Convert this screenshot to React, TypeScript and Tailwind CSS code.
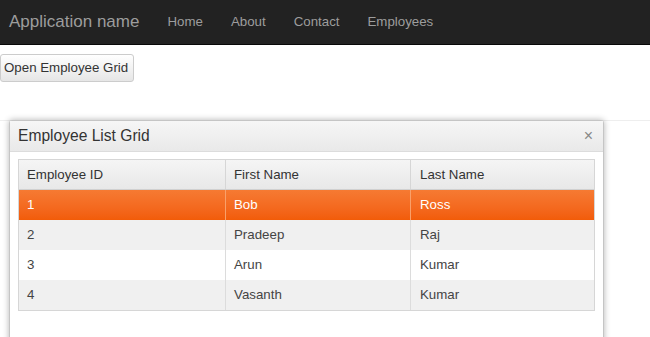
import React from "react";

const rows = [
  { id: "1", first: "Bob", last: "Ross" },
  { id: "2", first: "Pradeep", last: "Raj" },
  { id: "3", first: "Arun", last: "Kumar" },
  { id: "4", first: "Vasanth", last: "Kumar" },
];

export default function App() {
  return (
    <div
      className="relative w-[650px] h-[337px] overflow-hidden bg-white text-[#333]"
      style={{ fontFamily: '"Liberation Sans", Arial, sans-serif' }}
    >
      <nav className="h-[45px] bg-[#222] border-b border-[#080808] flex items-center">
        <span className="ml-[9px] text-[17px] text-[#9d9d9d]">Application name</span>
        <div className="flex ml-[28px] gap-[28px] text-[13.3px] text-[#9d9d9d]">
          <span>Home</span>
          <span>About</span>
          <span>Contact</span>
          <span>Employees</span>
        </div>
      </nav>
      <div className="pt-[9px]">
        <button className="h-[28px] w-[134px] pl-[3px] text-left text-[13.3px] text-[#333] border border-[#ccc] rounded-[3px] bg-gradient-to-b from-[#ffffff] to-[#e6e6e6]">
          Open Employee Grid
        </button>
      </div>
      <hr className="mt-[38px] border-t border-[#eee]" />

      <div className="absolute left-[9px] top-[120px] w-[595px] h-[240px] bg-white border border-[#c5c5c5] rounded-t-[3px] shadow-[0_0_6px_rgba(0,0,0,0.3)]">
        <div className="h-[31px] flex items-center justify-between pl-[8px] pr-[10px] bg-gradient-to-b from-[#f6f6f6] to-[#e9e9e9] border-b border-[#dcdcdc]">
          <span className="text-[15.6px] text-[#333]">Employee List Grid</span>
          <span className="text-[16px] leading-none text-[#888]">×</span>
        </div>
        <div className="mt-[7px] ml-[8px] w-[577px] border border-[#d6d6d6]">
          <div className="grid grid-cols-[207px_185px_1fr] h-[30px] bg-gradient-to-b from-[#f5f5f5] to-[#e8e8e8] border-b border-[#d0d0d0] text-[13.3px] text-[#333]">
            <div className="flex items-center pl-[8px] border-r border-[#d6d6d6]">Employee ID</div>
            <div className="flex items-center pl-[8px] border-r border-[#d6d6d6]">First Name</div>
            <div className="flex items-center pl-[9px]">Last Name</div>
          </div>
          {rows.map((r, i) => {
            const sel = i === 0;
            const bg = sel
              ? "bg-gradient-to-b from-[#f67a32] to-[#f25c08] text-white"
              : i % 2 === 1
              ? "bg-[#f0f0f0] text-[#444]"
              : "bg-white text-[#444]";
            const line = sel ? "border-[#f9a06a]" : "border-[#dcdcdc]";
            return (
              <div key={r.id} className={`grid grid-cols-[207px_185px_1fr] h-[30px] text-[13.3px] ${bg}`}>
                <div className={`flex items-center pl-[8px] border-r ${line}`}>{r.id}</div>
                <div className={`flex items-center pl-[8px] border-r ${line}`}>{r.first}</div>
                <div className="flex items-center pl-[9px]">{r.last}</div>
              </div>
            );
          })}
        </div>
      </div>
    </div>
  );
}
